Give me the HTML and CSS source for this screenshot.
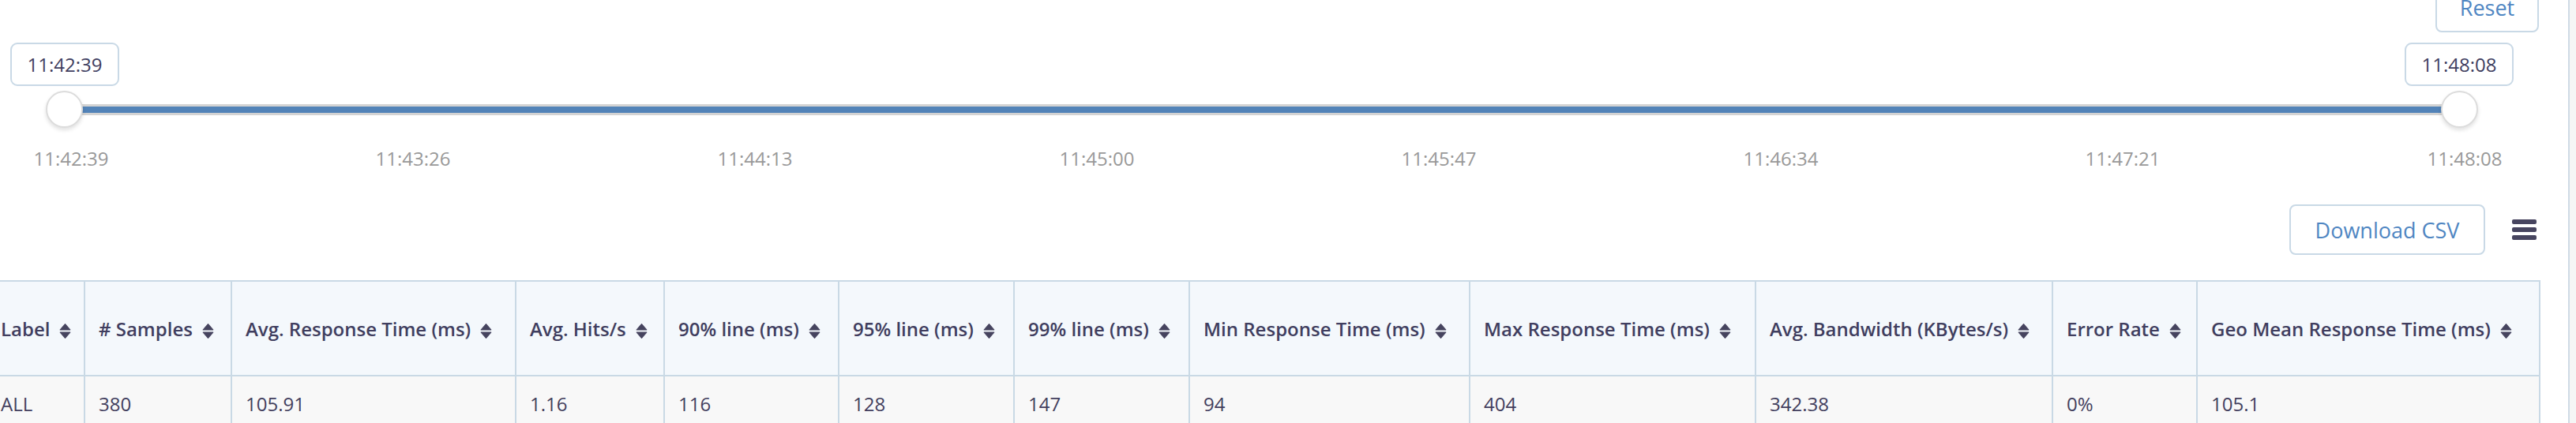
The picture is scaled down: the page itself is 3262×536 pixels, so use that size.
FILE: index.html
```html
<!DOCTYPE html>
<html lang="en">
<head>
<meta charset="utf-8">
<title>Statistics</title>
<link rel="stylesheet" href="styles.css">
</head>
<body>
<div class="panel">
  <div class="topbar">
    <button class="btn btn-reset">Reset</button>
  </div>

  <div class="slider">
    <div class="tips">
      <div class="tip">11:42:39</div>
      <div class="tip">11:48:08</div>
    </div>
    <div class="track-row">
      <span class="handle handle-left"></span>
      <span class="bar"></span>
      <span class="handle handle-right"></span>
    </div>
    <div class="ticks">
      <span>11:42:39</span>
      <span>11:43:26</span>
      <span>11:44:13</span>
      <span>11:45:00</span>
      <span>11:45:47</span>
      <span>11:46:34</span>
      <span>11:47:21</span>
      <span>11:48:08</span>
    </div>
  </div>

  <div class="toolbar">
    <button class="btn btn-csv">Download CSV</button>
    <span class="menu"><i></i><i></i><i></i></span>
  </div>

  <div class="table-wrap">
    <table class="stats">
      <colgroup>
        <col class="c-label"><col class="c-samples"><col class="c-avg"><col class="c-hits">
        <col class="c-p90"><col class="c-p95"><col class="c-p99"><col class="c-min">
        <col class="c-max"><col class="c-bw"><col class="c-err"><col class="c-geo">
      </colgroup>
      <thead>
        <tr>
          <th>Label<svg class="sort" viewBox="0 0 14 20"><path d="M7 1.5 L13 8.5 H1 Z M1 11.5 H13 L7 18.5 Z"/></svg></th>
          <th># Samples<svg class="sort" viewBox="0 0 14 20"><path d="M7 1.5 L13 8.5 H1 Z M1 11.5 H13 L7 18.5 Z"/></svg></th>
          <th>Avg. Response Time (ms)<svg class="sort" viewBox="0 0 14 20"><path d="M7 1.5 L13 8.5 H1 Z M1 11.5 H13 L7 18.5 Z"/></svg></th>
          <th>Avg. Hits/s<svg class="sort" viewBox="0 0 14 20"><path d="M7 1.5 L13 8.5 H1 Z M1 11.5 H13 L7 18.5 Z"/></svg></th>
          <th>90% line (ms)<svg class="sort" viewBox="0 0 14 20"><path d="M7 1.5 L13 8.5 H1 Z M1 11.5 H13 L7 18.5 Z"/></svg></th>
          <th>95% line (ms)<svg class="sort" viewBox="0 0 14 20"><path d="M7 1.5 L13 8.5 H1 Z M1 11.5 H13 L7 18.5 Z"/></svg></th>
          <th>99% line (ms)<svg class="sort" viewBox="0 0 14 20"><path d="M7 1.5 L13 8.5 H1 Z M1 11.5 H13 L7 18.5 Z"/></svg></th>
          <th>Min Response Time (ms)<svg class="sort" viewBox="0 0 14 20"><path d="M7 1.5 L13 8.5 H1 Z M1 11.5 H13 L7 18.5 Z"/></svg></th>
          <th>Max Response Time (ms)<svg class="sort" viewBox="0 0 14 20"><path d="M7 1.5 L13 8.5 H1 Z M1 11.5 H13 L7 18.5 Z"/></svg></th>
          <th>Avg. Bandwidth (KBytes/s)<svg class="sort" viewBox="0 0 14 20"><path d="M7 1.5 L13 8.5 H1 Z M1 11.5 H13 L7 18.5 Z"/></svg></th>
          <th>Error Rate<svg class="sort" viewBox="0 0 14 20"><path d="M7 1.5 L13 8.5 H1 Z M1 11.5 H13 L7 18.5 Z"/></svg></th>
          <th>Geo Mean Response Time (ms)<svg class="sort" viewBox="0 0 14 20"><path d="M7 1.5 L13 8.5 H1 Z M1 11.5 H13 L7 18.5 Z"/></svg></th>
        </tr>
      </thead>
      <tbody>
        <tr>
          <td>ALL</td><td>380</td><td>105.91</td><td>1.16</td><td>116</td><td>128</td>
          <td>147</td><td>94</td><td>404</td><td>342.38</td><td>0%</td><td>105.1</td>
        </tr>
      </tbody>
    </table>
  </div>
</div>
</body>
</html>
```
FILE: styles.css
```css
* { box-sizing: border-box; }
html, body { margin: 0; height: 100%; }
body {
  background: #f5f5f5;
  font-family: "Open Sans", "Noto Sans", sans-serif;
  color: #403e5f;
  overflow: hidden;
}
.panel {
  width: 3254px;
  height: 536px;
  background: #fff;
  border-right: 2px solid #cfdbe5;
  padding-right: 37px;
  overflow: hidden;
}
.topbar {
  display: flex;
  justify-content: flex-end;
  margin-top: -23px;
}
.btn {
  height: 64px;
  border: 2px solid #c9d9e6;
  border-radius: 8px;
  background: #fff;
  color: #4f86c2;
  font-family: inherit;
  font-size: 27px;
  padding: 0;
  display: inline-flex;
  align-items: center;
  justify-content: center;
}
.btn-reset { width: 131px; }
.btn-csv { width: 248px; }

.tips {
  display: flex;
  justify-content: space-between;
  padding: 0 32px 0 13px;
  margin-top: 13px;
}
.tip {
  width: 138px;
  height: 55px;
  border: 2px solid #c9d9e6;
  border-radius: 9px;
  display: flex;
  align-items: center;
  justify-content: center;
  font-size: 24px;
  color: #403e5f;
}
.track-row {
  display: flex;
  align-items: center;
  height: 47px;
  margin-top: 6px;
  padding: 0 77px 0 58px;
}
.handle {
  flex: none;
  width: 47px;
  height: 47px;
  border-radius: 50%;
  background: #fff;
  border: 2px solid #dcdcdc;
  box-shadow: 0 3px 5px rgba(0, 0, 0, 0.12);
  position: relative;
  z-index: 1;
}
.handle-left { margin-right: -23px; }
.handle-right { margin-left: -23px; }
.bar {
  flex: 1;
  height: 14px;
  background: #5283b8;
  border-top: 3px solid #d3d3d3;
  border-bottom: 3px solid #d3d3d3;
}
.ticks {
  display: flex;
  justify-content: space-between;
  padding: 0 34px 0 30px;
  margin-top: 22px;
  font-size: 24px;
  line-height: 33px;
  color: #999;
}
.ticks span { width: 120px; text-align: center; }

.toolbar {
  display: flex;
  justify-content: flex-end;
  align-items: center;
  gap: 34px;
  padding-right: 3px;
  margin-top: 42px;
}
.menu {
  display: flex;
  flex-direction: column;
  gap: 4px;
  width: 31px;
}
.menu i {
  display: block;
  height: 6px;
  border-radius: 2px;
  background: #47455f;
}

.table-wrap { margin-top: 32px; }
.stats {
  border-collapse: collapse;
  table-layout: fixed;
  width: 3233px;
  margin-left: -18px;
}
.c-label { width: 124px; }
.c-samples { width: 186px; }
.c-avg { width: 360px; }
.c-hits { width: 188px; }
.c-p90 { width: 221px; }
.c-p95 { width: 222px; }
.c-p99 { width: 222px; }
.c-min { width: 355px; }
.c-max { width: 362px; }
.c-bw { width: 376px; }
.c-err { width: 183px; }
.c-geo { width: 434px; }
.stats th, .stats td {
  border: 2px solid #c9d9e5;
  padding: 0 17px;
  text-align: left;
  white-space: nowrap;
  overflow: hidden;
}
.stats th {
  height: 120px;
  background: #f4f8fc;
  font-weight: 600;
  font-size: 24px;
  color: #403e5f;
}
.stats td {
  height: 70px;
  background: #f8f8f8;
  font-weight: 400;
  font-size: 24px;
  color: #433f5e;
}
.sort {
  width: 15px;
  height: 21px;
  margin-left: 12px;
  vertical-align: -4px;
  fill: #46445f;
  stroke: #46445f;
  stroke-width: 1;
  stroke-linejoin: round;
}
```
